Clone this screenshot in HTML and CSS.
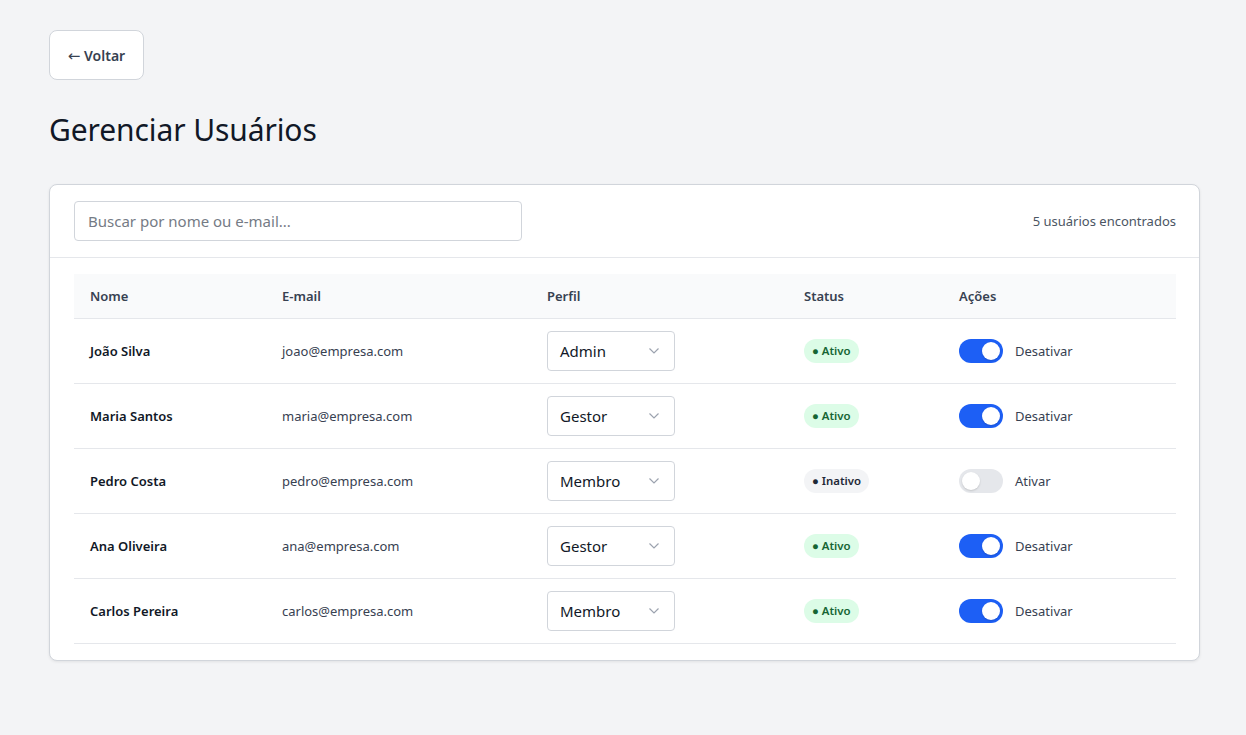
FILE: index.html
```html
<!DOCTYPE html>
<html lang="pt-BR">
<head>
<meta charset="utf-8">
<link rel="stylesheet" href="styles.css">
</head>
<body>
<div class="page">
  <button class="back"><span class="arrow">←</span> Voltar</button>
  <h1 class="title">Gerenciar Usuários</h1>
  <div class="card">
    <div class="card-head">
      <input class="search" type="text" placeholder="Buscar por nome ou e-mail...">
      <span class="count">5 usuários encontrados</span>
    </div>
    <div class="card-body">
      <table class="users">
        <colgroup>
          <col class="c1"><col class="c2"><col class="c3"><col class="c4"><col class="c5">
        </colgroup>
        <thead>
          <tr><th>Nome</th><th>E-mail</th><th>Perfil</th><th>Status</th><th>Ações</th></tr>
        </thead>
        <tbody>
          <tr>
            <td class="name">João Silva</td>
            <td class="email">joao@empresa.com</td>
            <td><div class="select">Admin<span class="chev"><svg width="12" height="8" viewBox="0 0 12 8"><path d="M1.5 1.5 6 6l4.5-4.5" fill="none" stroke="#9ca3af" stroke-width="1.2"/></svg></span></div></td>
            <td><span class="badge on">● Ativo</span></td>
            <td><div class="act"><span class="toggle on"><span class="knob"></span></span><span class="act-label">Desativar</span></div></td>
          </tr>
          <tr>
            <td class="name">Maria Santos</td>
            <td class="email">maria@empresa.com</td>
            <td><div class="select">Gestor<span class="chev"><svg width="12" height="8" viewBox="0 0 12 8"><path d="M1.5 1.5 6 6l4.5-4.5" fill="none" stroke="#9ca3af" stroke-width="1.2"/></svg></span></div></td>
            <td><span class="badge on">● Ativo</span></td>
            <td><div class="act"><span class="toggle on"><span class="knob"></span></span><span class="act-label">Desativar</span></div></td>
          </tr>
          <tr>
            <td class="name">Pedro Costa</td>
            <td class="email">pedro@empresa.com</td>
            <td><div class="select">Membro<span class="chev"><svg width="12" height="8" viewBox="0 0 12 8"><path d="M1.5 1.5 6 6l4.5-4.5" fill="none" stroke="#9ca3af" stroke-width="1.2"/></svg></span></div></td>
            <td><span class="badge off">● Inativo</span></td>
            <td><div class="act"><span class="toggle off"><span class="knob"></span></span><span class="act-label">Ativar</span></div></td>
          </tr>
          <tr>
            <td class="name">Ana Oliveira</td>
            <td class="email">ana@empresa.com</td>
            <td><div class="select">Gestor<span class="chev"><svg width="12" height="8" viewBox="0 0 12 8"><path d="M1.5 1.5 6 6l4.5-4.5" fill="none" stroke="#9ca3af" stroke-width="1.2"/></svg></span></div></td>
            <td><span class="badge on">● Ativo</span></td>
            <td><div class="act"><span class="toggle on"><span class="knob"></span></span><span class="act-label">Desativar</span></div></td>
          </tr>
          <tr>
            <td class="name">Carlos Pereira</td>
            <td class="email">carlos@empresa.com</td>
            <td><div class="select">Membro<span class="chev"><svg width="12" height="8" viewBox="0 0 12 8"><path d="M1.5 1.5 6 6l4.5-4.5" fill="none" stroke="#9ca3af" stroke-width="1.2"/></svg></span></div></td>
            <td><span class="badge on">● Ativo</span></td>
            <td><div class="act"><span class="toggle on"><span class="knob"></span></span><span class="act-label">Desativar</span></div></td>
          </tr>
        </tbody>
      </table>
    </div>
  </div>
</div>
</body>
</html>
```

FILE: styles.css
```css
* { box-sizing: border-box; }
html, body { margin: 0; padding: 0; }
body {
  background: #f3f4f6;
  font-family: "Noto Sans", "Open Sans", sans-serif;
  color: #111827;
}
.page {
  padding: 30px 46px 40px 49px;
}
.back {
  display: block;
  width: 95px;
  height: 50px;
  background: #fff;
  border: 1px solid #d1d5db;
  border-radius: 8px;
  font-family: inherit;
  font-size: 14px;
  font-weight: 600;
  color: #374151;
  padding: 0;
}
.arrow {
  font-family: "DejaVu Sans", sans-serif;
  font-weight: 400;
  font-size: 15px;
}
.title {
  margin: 29px 0 0 0;
  font-size: 30px;
  font-weight: 400;
  line-height: 42px;
  color: #111827;
  letter-spacing: -0.1px;
}
.card {
  margin-top: 33px;
  background: #fff;
  border: 1px solid #d1d5db;
  border-radius: 8px;
  box-shadow: 0 1px 3px rgba(0,0,0,0.08);
}
.card-head {
  display: flex;
  align-items: center;
  justify-content: space-between;
  padding: 16px 23px 16px 24px;
  border-bottom: 1px solid #e5e7eb;
}
.search {
  width: 448px;
  height: 40px;
  border: 1px solid #d1d5db;
  border-radius: 4px;
  padding: 0 13px;
  font-family: inherit;
  font-size: 15px;
  color: #111827;
  outline: none;
}
.search::placeholder { color: #757b85; }
.count {
  font-size: 13px;
  color: #4b5563;
}
.card-body {
  padding: 16px 23px 16px 24px;
}
.users {
  width: 100%;
  border-collapse: collapse;
  table-layout: fixed;
}
.c1 { width: 192px; }
.c2 { width: 265px; }
.c3 { width: 257px; }
.c4 { width: 155px; }
.c5 { width: auto; }
.users th {
  background: #f9fafb;
  height: 44px;
  text-align: left;
  padding: 0 16px;
  font-size: 13px;
  font-weight: 600;
  color: #374151;
  border-bottom: 1px solid #e5e7eb;
}
.users td {
  height: 65px;
  padding: 0 16px;
  border-bottom: 1px solid #e5e7eb;
  font-size: 13px;
  vertical-align: middle;
}
.name { font-weight: 600; color: #111827; }
.email { color: #374151; }
.select {
  display: flex;
  align-items: center;
  justify-content: space-between;
  width: 128px;
  height: 40px;
  border: 1px solid #d1d5db;
  border-radius: 4px;
  padding: 0 14px 0 12px;
  font-size: 15px;
  color: #111827;
  background: #fff;
}
.chev { display: flex; align-items: center; }
.badge {
  display: inline-block;
  height: 24px;
  line-height: 24px;
  padding: 0 8px;
  border-radius: 12px;
  font-size: 11.4px;
  font-weight: 600;
}
.badge.on { background: #dcfce7; color: #166534; }
.badge.off { background: #f3f4f6; color: #1f2937; }
.act {
  display: flex;
  align-items: center;
  gap: 12px;
}
.toggle {
  display: flex;
  align-items: center;
  width: 44px;
  height: 24px;
  border-radius: 12px;
  padding: 0 3px;
}
.toggle.on { background: #1d5ff5; justify-content: flex-end; }
.toggle.off { background: #e5e7eb; justify-content: flex-start; }
.knob {
  width: 18px;
  height: 18px;
  border-radius: 50%;
  background: #fff;
  box-shadow: 0 1px 2px rgba(0,0,0,0.15);
}
.act-label { color: #374151; font-size: 13px; }
```
